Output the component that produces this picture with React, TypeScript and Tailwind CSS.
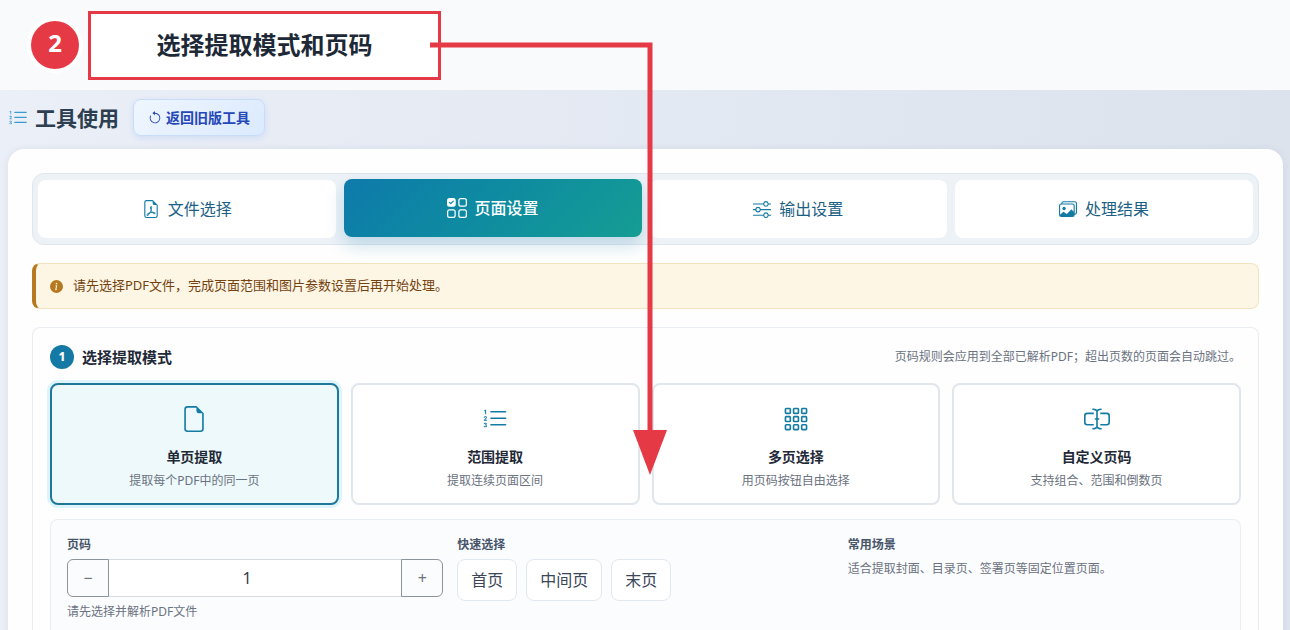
import { useState } from "react"
import type { IconType } from "react-icons"
import {
  BsArrowCounterclockwise,
  BsFileEarmark,
  BsFileEarmarkPdf,
  BsGrid3X3Gap,
  BsImages,
  BsInfoCircleFill,
  BsInputCursorText,
  BsListOl,
  BsSliders,
  BsUiChecksGrid,
} from "react-icons/bs"

interface Tab {
  id: string
  label: string
  icon: IconType
}

interface Mode {
  id: string
  title: string
  description: string
  icon: IconType
}

const TABS: Tab[] = [
  { id: "files", label: "文件选择", icon: BsFileEarmarkPdf },
  { id: "pages", label: "页面设置", icon: BsUiChecksGrid },
  { id: "output", label: "输出设置", icon: BsSliders },
  { id: "result", label: "处理结果", icon: BsImages },
]

const MODES: Mode[] = [
  { id: "single", title: "单页提取", description: "提取每个PDF中的同一页", icon: BsFileEarmark },
  { id: "range", title: "范围提取", description: "提取连续页面区间", icon: BsListOl },
  { id: "multi", title: "多页选择", description: "用页码按钮自由选择", icon: BsGrid3X3Gap },
  { id: "custom", title: "自定义页码", description: "支持组合、范围和倒数页", icon: BsInputCursorText },
]

const QUICK_PICKS = ["首页", "中间页", "末页"]

function StepCallout() {
  return (
    <div className="relative flex h-[90px] items-center gap-[9px] bg-[#f9fafc] pl-[31px]">
      <span className="flex size-12 items-center justify-center rounded-full bg-[#e63946] pb-1 text-2xl font-bold text-white ring-4 ring-white">
        2
      </span>
      <h1 className="flex h-[69px] w-[353px] items-center justify-center border-3 border-[#e63946] bg-white text-2xl font-bold text-[#1d2936]">
        选择提取模式和页码
      </h1>
      {/* Arrow from the callout down to the mode cards */}
      <svg
        className="pointer-events-none absolute top-0 left-[430px] z-10"
        width="240"
        height="480"
        viewBox="0 0 240 480"
        fill="none"
        aria-hidden="true"
      >
        <path d="M0 45H220V432" stroke="#e63946" strokeWidth="5" />
        <path d="M203 430H237L220 475Z" fill="#e63946" />
      </svg>
    </div>
  )
}

function TabBar({ active, onChange }: { active: string; onChange: (id: string) => void }) {
  return (
    <div
      role="tablist"
      className="grid grid-cols-4 gap-2 rounded-xl border border-[#dfe6ec] bg-[#edf2f7] px-[5px] py-1.5"
    >
      {TABS.map(({ id, label, icon: Icon }) => (
        <button
          key={id}
          type="button"
          role="tab"
          aria-selected={active === id}
          onClick={() => onChange(id)}
          className={`flex h-[58px] items-center justify-center gap-2 rounded-lg text-base ${
            active === id
              ? "-translate-y-px bg-linear-135 from-[#0f7aab] to-[#169d93] font-medium text-white shadow-[0_8px_18px_rgba(15,118,168,0.22)]"
              : "bg-white text-[#1c5f85]"
          }`}
        >
          <Icon className={active === id ? "size-5" : "size-[18px] text-[#147ba5]"} />
          {label}
        </button>
      ))}
    </div>
  )
}

function ModeCards({ active, onChange }: { active: string; onChange: (id: string) => void }) {
  return (
    <div className="mt-[14px] grid grid-cols-4 gap-3">
      {MODES.map(({ id, title, description, icon: Icon }) => (
        <button
          key={id}
          type="button"
          aria-pressed={active === id}
          onClick={() => onChange(id)}
          className={`flex flex-col items-center rounded-lg border-2 pt-[21px] pb-[13px] ${
            active === id
              ? "border-[#1f789a] bg-[#edf9fb] ring-3 ring-[#def4fb]"
              : "border-[#e0e6ec] bg-white"
          }`}
        >
          <Icon className="size-[26px] text-[#147ba5]" />
          <span className="mt-[15px] text-sm font-bold text-[#1f2937]">{title}</span>
          <span className="mt-[5px] text-xs leading-[18px] text-[#6b7280]">{description}</span>
        </button>
      ))}
    </div>
  )
}

function SinglePageSettings() {
  const [page, setPage] = useState(1)

  return (
    <div className="mt-[14px] grid flex-1 grid-cols-3 content-start gap-[14px] rounded-t-lg border border-b-0 border-[#e9eef2] bg-[#fbfcfe] p-4">
      <div>
        <label htmlFor="page-number" className="block text-xs leading-[18px] font-bold text-[#475569]">
          页码
        </label>
        <div className="mt-[5px] flex h-[38px]">
          <button
            type="button"
            aria-label="减少页码"
            onClick={() => setPage(Math.max(1, page - 1))}
            className="w-[42px] rounded-l-md border border-[#8b939b] text-base text-[#6c757d]"
          >
            −
          </button>
          <input
            id="page-number"
            type="text"
            inputMode="numeric"
            value={page}
            onChange={(e) => setPage(Number(e.target.value) || 1)}
            className="min-w-0 flex-1 border-y border-[#d5dade] bg-white pr-4 text-center text-base text-[#374151] outline-none"
          />
          <button
            type="button"
            aria-label="增加页码"
            onClick={() => setPage(page + 1)}
            className="w-[42px] rounded-r-md border border-[#8b939b] text-base text-[#6c757d]"
          >
            +
          </button>
        </div>
        <p className="mt-[6px] text-xs leading-[18px] text-[#6b7280]">请先选择并解析PDF文件</p>
      </div>

      <div>
        <h3 className="text-xs leading-[18px] font-bold text-[#475569]">快速选择</h3>
        <div className="mt-[5px] flex gap-[9px]">
          {QUICK_PICKS.map((label) => (
            <button
              key={label}
              type="button"
              className="h-[42px] rounded-lg border border-[#e2e8f0] bg-white px-[13px] text-base text-[#3b4658]"
            >
              {label}
            </button>
          ))}
        </div>
      </div>

      <div>
        <h3 className="text-xs leading-[18px] font-bold text-[#475569]">常用场景</h3>
        <p className="mt-[6px] text-xs leading-[18px] text-[#6b7280]">
          适合提取封面、目录页、签署页等固定位置页面。
        </p>
      </div>
    </div>
  )
}

export default function App() {
  const [tab, setTab] = useState("pages")
  const [mode, setMode] = useState("single")

  return (
    <div className="flex min-h-screen flex-col font-['Noto_Sans','Noto_Sans_CJK_SC',sans-serif]">
      <StepCallout />

      <main className="flex flex-1 flex-col bg-linear-to-r from-[#ebeff7] to-[#dce3ed] pr-[7px] pl-2">
        <header className="flex items-center pt-[9px] pb-[13px]">
          <BsListOl className="size-5 text-[#3b9bd0]" />
          <h2 className="ml-[7px] text-[21px] leading-8 font-bold text-[#2c3e50]">工具使用</h2>
          <button
            type="button"
            className="ml-[14px] flex h-[37px] items-center gap-1 rounded-lg border border-[#c9dcf8] bg-linear-135 from-[#eff6ff] to-[#dbeafe] px-[14px] text-sm font-bold text-[#2548b8] shadow-[0_2px_6px_rgba(59,130,246,0.15)]"
          >
            <BsArrowCounterclockwise className="size-[14px]" />
            返回旧版工具
          </button>
        </header>

        <div className="flex flex-1 flex-col rounded-t-2xl bg-[#fefefe] px-6 pt-6 shadow-[0_0_6px_rgba(100,116,139,0.12)]">
          <TabBar active={tab} onChange={setTab} />

          <div
            role="status"
            className="mt-[18px] flex h-[46px] items-center gap-[10px] rounded-lg border border-l-4 border-[#f1e3c0] border-l-[#b7791f] bg-[#fef6e4] pl-[14px] text-[13px] text-[#744210]"
          >
            <BsInfoCircleFill className="size-[13px] text-[#b7791f]" />
            请先选择PDF文件，完成页面范围和图片参数设置后再开始处理。
          </div>

          <section className="mt-[18px] flex flex-1 flex-col rounded-t-lg border border-b-0 border-[#e9edf1] px-[17px] pt-[17px]">
            <div className="flex items-center justify-between">
              <h2 className="flex items-center gap-2 text-[15px] leading-6 font-bold text-[#1f2937]">
                <span className="flex size-6 items-center justify-center rounded-full bg-[#1579a6] text-xs font-extrabold text-white">
                  1
                </span>
                选择提取模式
              </h2>
              <p className="text-xs text-[#6b7280]">
                页码规则会应用到全部已解析PDF；超出页数的页面会自动跳过。
              </p>
            </div>
            <ModeCards active={mode} onChange={setMode} />
            <SinglePageSettings />
          </section>
        </div>
      </main>
    </div>
  )
}
